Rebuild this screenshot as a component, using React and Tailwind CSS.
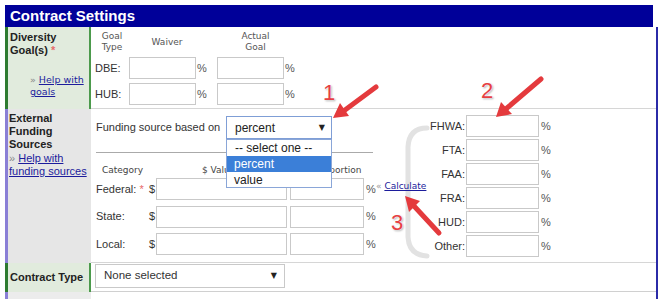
import React from "react";

const Field = ({ className = "" }) => (
  <div className={`h-[22px] shrink-0 border border-[#c9c9c9] bg-white ${className}`} />
);

const Arrow = ({ line, head }) => (
  <g>
    <line {...line} stroke="#e43a3d" strokeWidth="5" strokeLinecap="round" />
    <polygon points={head} fill="#e43a3d" />
  </g>
);

const Num = ({ className, children }) => (
  <span
    className={`absolute text-[22px] leading-[22px] text-[#e63f43] font-['Liberation_Sans',Arial,sans-serif] [text-shadow:0_0_2px_#fff,0_0_2px_#fff,1px_1px_2px_#999] ${className}`}
  >
    {children}
  </span>
);

const fundRows = [
  { label: "Federal:", star: true, calc: true },
  { label: "State:" },
  { label: "Local:" },
];

const agencies = ["FHWA:", "FTA:", "FAA:", "FRA:", "HUD:", "Other:"];

export default function App() {
  return (
    <div className="relative w-[664px] h-[299px] overflow-hidden bg-white text-[#333] font-['Liberation_Sans',Arial,sans-serif]">
      <div className="pl-[5px] pt-[5px]">
        <div className="w-[648px] h-[22px] bg-[#000099] pl-[5px] text-[15px] leading-[22px] font-bold text-white">
          Contract Settings
        </div>

        <div className="w-[653px] border-r-2 border-[#2b2ba8]">
          {/* diversity goals */}
          <div className="flex">
            <div className="w-[86px] shrink-0 bg-[#e1ebdd] border-l-[3px] border-r-2 border-l-[#2e7b30] border-r-[#4c9a4c] pl-[2px] pt-[4px]">
              <div className="text-[11px] leading-[13px] font-bold text-[#222]">
                Diversity
                <br />
                Goal(s) <span className="text-[#e86a6a]">*</span>
              </div>
              <div className="mt-[17px] pl-[20px] text-[9.5px] leading-[12px] font-['DejaVu_Sans',Verdana,sans-serif]">
                <div>
                  <span className="text-[#888]">» </span>
                  <span className="text-[#1c1c9c] underline">Help with</span>
                </div>
                <div className="text-[#1c1c9c] underline">goals</div>
              </div>
            </div>
            <div className="flex-1 h-[82px] border-b border-[#d6d6d6] pl-[4px] pt-[4px]">
              <div className="grid grid-cols-[34px_67px_21px_67px_20px] h-[22px] text-[9px] leading-[11px] text-[#555] font-['DejaVu_Sans',Verdana,sans-serif]">
                <div className="text-center">
                  Goal
                  <br />
                  Type
                </div>
                <div className="col-span-2 flex items-center justify-center pr-[12px]">Waiver</div>
                <div className="col-span-2 text-center pr-[10px]">
                  Actual
                  <br />
                  Goal
                </div>
              </div>
              <div className="mt-[4px] grid grid-cols-[34px_67px_21px_67px_20px] gap-y-[4px] items-center text-[11px]">
                {["DBE:", "HUB:"].map((g) => (
                  <React.Fragment key={g}>
                    <span>{g}</span>
                    <Field className="w-[67px]" />
                    <span className="pl-[1px] text-[#555]">%</span>
                    <Field className="w-[67px]" />
                    <span className="pl-[1px] text-[#555]">%</span>
                  </React.Fragment>
                ))}
              </div>
            </div>
          </div>

          {/* external funding */}
          <div className="flex">
            <div className="w-[86px] shrink-0 bg-[#e6e6e6] border-l-[3px] border-r-2 border-l-[#8a7fd6] border-r-[#e6e6e6] pl-[1px] pt-[3px]">
              <div className="text-[11px] leading-[13px] font-bold text-[#222]">
                External
                <br />
                Funding
                <br />
                Sources
              </div>
              <div className="mt-px text-[11px] leading-[13px]">
                <div>
                  <span className="text-[#888]">» </span>
                  <span className="text-[#1c1c9c] underline">Help with</span>
                </div>
                <div className="text-[#1c1c9c] underline">funding sources</div>
              </div>
            </div>
            <div className="relative flex flex-1 h-[154px] border-b border-[#d6d6d6]">
              <svg className="absolute left-0 top-0" width="360" height="153">
                <path
                  d="M336 19 Q318 19 317 38 L317 128 Q318 146 336 147"
                  fill="none"
                  stroke="#e2e2e2"
                  strokeWidth="5"
                  strokeLinecap="round"
                />
              </svg>

              <div className="relative w-[339px] shrink-0 pl-[5px] pt-[7px]">
                <div className="flex items-center h-[23px]">
                  <span className="w-[130px] text-[11px]">Funding source based on</span>
                  <div className="w-[106px] h-[23px] border border-[#7f9ed6] flex items-center justify-between pl-[8px] pr-[6px] text-[12px] text-[#222]">
                    percent
                    <span className="text-[8px] font-['DejaVu_Sans',sans-serif]">▼</span>
                  </div>
                </div>
                <div className="mt-[13px] w-[277px] h-px bg-[#aaaaaa]" />
                <div className="mt-[11px] flex h-[12px] text-[9px] leading-[12px] text-[#444] font-['DejaVu_Sans',Verdana,sans-serif]">
                  <span className="w-[106px] pl-[6px]">Category</span>
                  <span className="w-[113px]">$ Value</span>
                  <span>Proportion</span>
                </div>
                <div className="mt-[2px] flex flex-col gap-[5.5px] text-[11px]">
                  {fundRows.map((r) => (
                    <div key={r.label} className="flex items-center h-[22px]">
                      <span className="w-[53px]">
                        {r.label}
                        {r.star && <span className="text-[#e86a6a]"> *</span>}
                      </span>
                      <span className="w-[7px]">$</span>
                      <Field className="w-[131px]" />
                      <Field className="ml-[3px] w-[74px]" />
                      <span className="w-[12px] pl-[2px] text-[#555]">%</span>
                      {r.calc && (
                        <span className="self-start pt-[2px] text-[9px] leading-[12px] font-['DejaVu_Sans',Verdana,sans-serif]">
                          <span className="text-[#999]">« </span>
                          <span className="text-[#1c1c9c] underline">Calculate</span>
                        </span>
                      )}
                    </div>
                  ))}
                </div>

                <div className="absolute left-[135px] top-[30px] w-[106px] border border-[#8aa6d8] bg-white text-[12px] leading-[16px] text-[#222]">
                  <div className="pl-[8px] h-[16px]">-- select one --</div>
                  <div className="pl-[7px] h-[16px] bg-[#3b7fd8] text-white">percent</div>
                  <div className="pl-[7px] h-[15px]">value</div>
                </div>
              </div>

              <div className="relative pt-[6px] flex flex-col gap-[2px] text-[11px]">
                {agencies.map((a) => (
                  <div key={a} className="flex items-center h-[22px]">
                    <span className="w-[35px] text-right">{a}</span>
                    <Field className="ml-[1px] w-[73px]" />
                    <span className="pl-[2px] text-[#555]">%</span>
                  </div>
                ))}
              </div>
            </div>
          </div>

          {/* contract type */}
          <div className="flex">
            <div className="w-[86px] shrink-0 bg-[#e1ebdd] border-l-[3px] border-r-2 border-l-[#2e7b30] border-r-[#4c9a4c] pl-[2px] flex items-center text-[11px] font-bold text-[#222]">
              Contract Type
            </div>
            <div className="flex-1 h-[29px] border-b border-[#d0d0d0] pl-[4px] pt-[1px]">
              <div className="w-[190px] h-[24px] border border-[#c9c9c9] flex items-center justify-between pl-[8px] pr-[7px] text-[11.5px] text-[#333]">
                None selected
                <span className="text-[8px] font-['DejaVu_Sans',sans-serif] text-[#222]">▼</span>
              </div>
            </div>
          </div>

          <div className="flex h-[10px]">
            <div className="w-[86px] shrink-0 bg-[#ececec] border-l-[3px] border-l-[#8a7fd6]" />
            <div className="flex-1" />
          </div>
        </div>
      </div>

      <svg className="absolute left-0 top-0 pointer-events-none" width="664" height="299">
        <Arrow
          line={{ x1: 376, y1: 87, x2: 345, y2: 110 }}
          head="333,118 349,116 340,103"
        />
        <Arrow
          line={{ x1: 541, y1: 79, x2: 507, y2: 108 }}
          head="496,117 512,114 501,102"
        />
        <Arrow
          line={{ x1: 439, y1: 233, x2: 414, y2: 206 }}
          head="405,196 420,201 409,212"
        />
      </svg>
      <Num className="left-[323px] top-[82px]">1</Num>
      <Num className="left-[481px] top-[80px]">2</Num>
      <Num className="left-[391px] top-[212px]">3</Num>
    </div>
  );
}
